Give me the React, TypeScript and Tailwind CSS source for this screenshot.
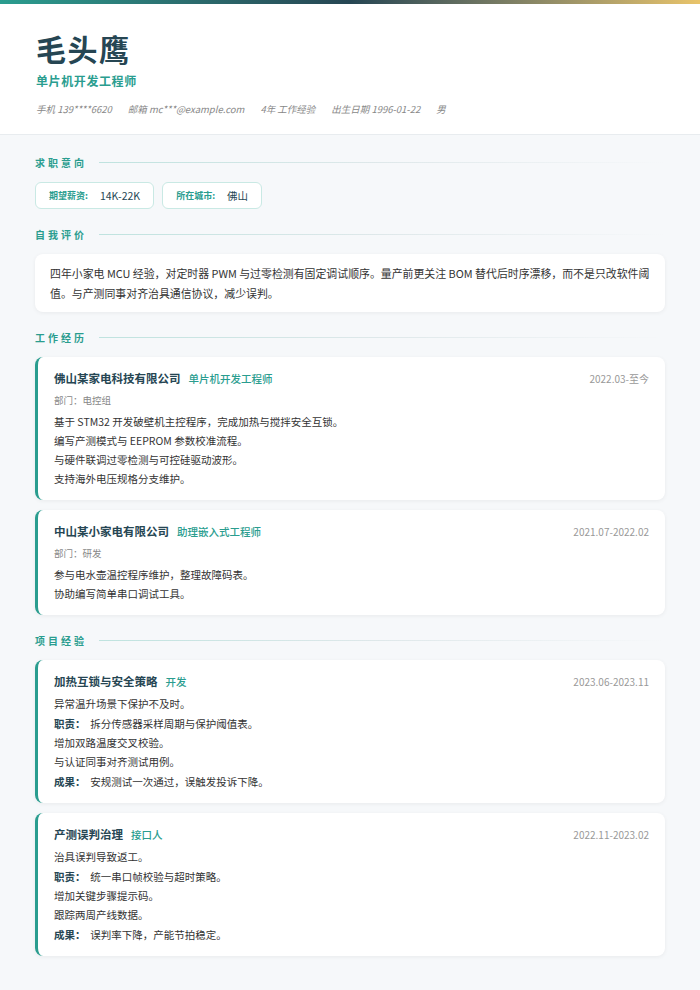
const F = { fontFamily: '"Noto Sans CJK SC", "Noto Sans", sans-serif' };

function Section({ title }: { title: string }) {
  return (
    <div className="flex items-center gap-3 mt-[18px] mb-[12px]">
      <span className="text-[10px] font-bold tracking-[0.3em] text-[#2a9d8f]">{title}</span>
      <div className="flex-1 h-px bg-gradient-to-r from-[#bfe3df] via-[#dfe8ea] to-transparent" />
    </div>
  );
}

function Card({ children }: { children: React.ReactNode }) {
  return (
    <div className="bg-white rounded-lg border-l-[3px] border-[#2a9d8f] shadow-[0_1px_4px_rgba(0,0,0,0.06)] pl-[16px] pr-[16px] pt-[12px] pb-[12px] mb-[10px] text-[10.5px] text-[#333] leading-[19px]">
      {children}
    </div>
  );
}

function Head({ name, role, date }: { name: string; role: string; date: string }) {
  return (
    <div className="flex items-center justify-between">
      <div className="flex items-baseline gap-2">
        <span className="text-[11.5px] font-bold text-[#264653]">{name}</span>
        <span className="text-[10.5px] text-[#2a9d8f] font-medium">{role}</span>
      </div>
      <span className="text-[10px] text-[#999]">{date}</span>
    </div>
  );
}

export default function App() {
  return (
    <div style={F} className="w-[700px] min-h-[990px] bg-[#f6f8fa]">
      <div className="h-[4px] bg-gradient-to-r from-[#2a9d8f] via-[#264653] to-[#e9c46a]" />
      <div className="bg-white border-b border-[#e8ecef] pl-[36px] pt-[24px] pb-[18px]">
        <div className="text-[30px] font-bold text-[#264653] leading-[40px] tracking-[0.05em]">毛头鹰</div>
        <div className="text-[12px] font-bold text-[#2a9d8f] mt-[4px] tracking-[0.05em]">单片机开发工程师</div>
        <div className="flex gap-[16px] text-[9.5px] italic text-[#888] mt-[12px]">
          <span>手机 139****6620</span>
          <span>邮箱 mc***@example.com</span>
          <span>4年 工作经验</span>
          <span>出生日期 1996-01-22</span>
          <span>男</span>
        </div>
      </div>
      <div className="px-[35px] pt-[2px] pb-[10px]">
        <Section title="求职意向" />
        <div className="flex gap-[8px]">
          <div className="bg-white border border-[#c9e9e4] rounded-md px-[13px] h-[27px] flex items-center gap-3">
            <span className="text-[9px] font-bold text-[#2a9d8f]">期望薪资:</span>
            <span className="text-[10.5px] text-[#264653]">14K-22K</span>
          </div>
          <div className="bg-white border border-[#c9e9e4] rounded-md px-[13px] h-[27px] flex items-center gap-3">
            <span className="text-[9px] font-bold text-[#2a9d8f]">所在城市:</span>
            <span className="text-[10.5px] text-[#264653]">佛山</span>
          </div>
        </div>
        <Section title="自我评价" />
        <div className="bg-white rounded-lg shadow-[0_1px_4px_rgba(0,0,0,0.06)] px-[15px] py-[9px] text-[10.9px] leading-[20px] text-[#333]">
          四年小家电 MCU 经验，对定时器 PWM 与过零检测有固定调试顺序。量产前更关注 BOM 替代后时序漂移，而不是只改软件阈值。与产测同事对齐治具通信协议，减少误判。
        </div>
        <Section title="工作经历" />
        <Card>
          <Head name="佛山某家电科技有限公司" role="单片机开发工程师" date="2022.03-至今" />
          <div className="text-[9.5px] text-[#888] mt-[3px] mb-[2px]">部门：电控组</div>
          <div>基于 STM32 开发破壁机主控程序，完成加热与搅拌安全互锁。</div>
          <div>编写产测模式与 EEPROM 参数校准流程。</div>
          <div>与硬件联调过零检测与可控硅驱动波形。</div>
          <div>支持海外电压规格分支维护。</div>
        </Card>
        <Card>
          <Head name="中山某小家电有限公司" role="助理嵌入式工程师" date="2021.07-2022.02" />
          <div className="text-[9.5px] text-[#888] mt-[3px] mb-[2px]">部门：研发</div>
          <div>参与电水壶温控程序维护，整理故障码表。</div>
          <div>协助编写简单串口调试工具。</div>
        </Card>
        <Section title="项目经验" />
        <Card>
          <Head name="加热互锁与安全策略" role="开发" date="2023.06-2023.11" />
          <div className="mt-[3px]">异常温升场景下保护不及时。</div>
          <div className="mt-[1px]"><b className="text-[#264653]">职责：</b>&nbsp; 拆分传感器采样周期与保护阈值表。</div>
          <div>增加双路温度交叉校验。</div>
          <div>与认证同事对齐测试用例。</div>
          <div className="mt-[1px]"><b className="text-[#264653]">成果：</b>&nbsp; 安规测试一次通过，误触发投诉下降。</div>
        </Card>
        <Card>
          <Head name="产测误判治理" role="接口人" date="2022.11-2023.02" />
          <div className="mt-[3px]">治具误判导致返工。</div>
          <div className="mt-[1px]"><b className="text-[#264653]">职责：</b>&nbsp; 统一串口帧校验与超时策略。</div>
          <div>增加关键步骤提示码。</div>
          <div>跟踪两周产线数据。</div>
          <div className="mt-[1px]"><b className="text-[#264653]">成果：</b>&nbsp; 误判率下降，产能节拍稳定。</div>
        </Card>
      </div>
    </div>
  );
}
